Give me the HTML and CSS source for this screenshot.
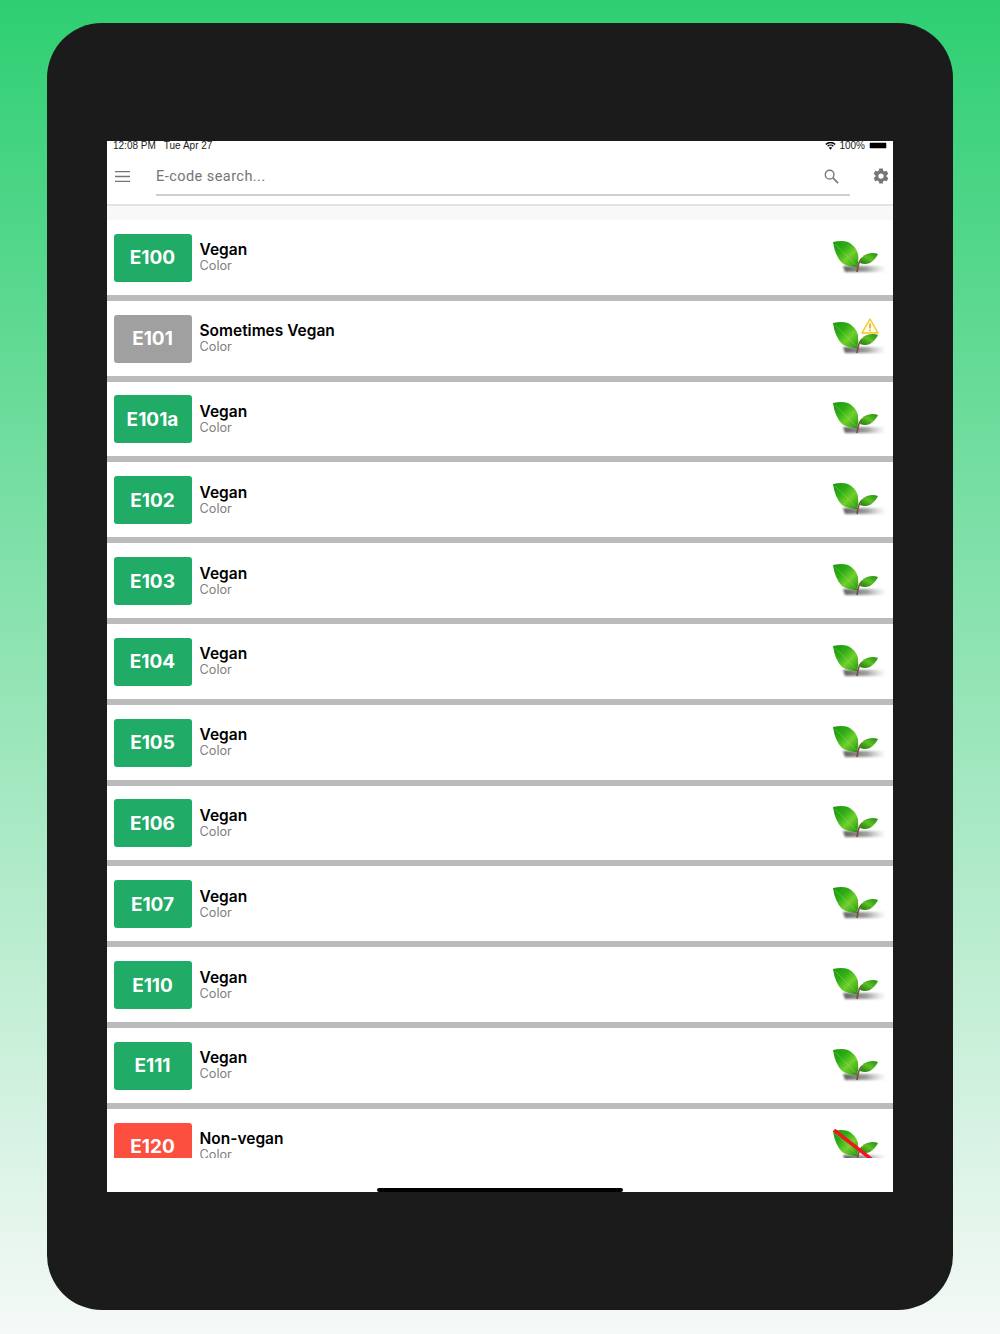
FILE: index.html
```html
<!DOCTYPE html>
<html lang="en">
<head>
    <meta charset="UTF-8">
    <meta name="viewport" content="width=device-width, initial-scale=1.0">
    <title>E-code search</title>
    <link rel="stylesheet" href="styles.css">
</head>
<body>
    <svg class="defs" width="0" height="0">
        <defs>
            <linearGradient id="leafBig" x1="0" y1="0" x2="1" y2="1">
                <stop offset="0" stop-color="#1b960f"/>
                <stop offset="0.35" stop-color="#2fae16"/>
                <stop offset="0.62" stop-color="#72d02e"/>
                <stop offset="0.85" stop-color="#3fae18"/>
                <stop offset="1" stop-color="#1a740c"/>
            </linearGradient>
            <linearGradient id="leafSmall" x1="1" y1="0" x2="0" y2="1">
                <stop offset="0" stop-color="#1f8f10"/>
                <stop offset="0.5" stop-color="#5cc024"/>
                <stop offset="1" stop-color="#1a740c"/>
            </linearGradient>
            <linearGradient id="shadow" x1="0" y1="0" x2="1" y2="0">
                <stop offset="0" stop-color="#444" stop-opacity="0.85"/>
                <stop offset="0.55" stop-color="#777" stop-opacity="0.7"/>
                <stop offset="1" stop-color="#aaa" stop-opacity="0"/>
            </linearGradient>
            <filter id="soft" x="-10%" y="-50%" width="120%" height="200%">
                <feGaussianBlur stdDeviation="0.9"/>
            </filter>
            <symbol id="leaf" viewBox="0 0 56 36">
                <path d="M10 26 H53 V32 H12 Z" fill="url(#shadow)" filter="url(#soft)"/>
                <path d="M24 32 L25 26 Q26 21 29 18" fill="none" stroke="#7a5238" stroke-width="1.700"/>
                <path d="M0 2 Q9 0 15 2 Q23 6 25 14 Q26 21 24 27 Q15 27 9 23 Q2 16 0 2Z" fill="url(#leafBig)"/>
                <path d="M2 4 Q12 14 24 26" fill="none" stroke="#b4ea78" stroke-width="0.500" opacity="0.600"/>
                <path d="M27 23 Q28 16 34 14 Q40 12 45 14 Q42 20 37 23 Q32 25 27 23Z" fill="url(#leafSmall)"/>
            </symbol>
            <symbol id="gear" viewBox="0 0 24 24">
                <path d="M19.4 13c.04-.3.06-.65.06-1s-.02-.7-.06-1l2.100-1.650c.2-.15.25-.42.12-.64l-2-3.460c-.12-.22-.39-.3-.61-.22l-2.490 1c-.52-.4-1.080-.73-1.690-.98l-.38-2.650A.49.49 0 0 0 14 2h-4c-.25 0-.46.18-.49.42l-.38 2.650c-.61.25-1.170.59-1.690.98l-2.490-1a.5.5 0 0 0-.61.22l-2 3.460c-.13.22-.07.49.12.64L4.570 11c-.04.32-.07.66-.07 1s.03.68.07 1l-2.110 1.650c-.19.15-.25.42-.12.64l2 3.460c.12.22.39.3.61.22l2.490-1c.52.4 1.080.73 1.690.98l.38 2.650c.03.24.24.42.49.42h4c.25 0 .46-.18.49-.42l.38-2.650c.61-.25 1.170-.59 1.690-.98l2.490 1c.23.09.49 0 .61-.22l2-3.460c.12-.22.07-.49-.12-.64L19.4 13zM12 15.500a3.500 3.500 0 1 1 0-7 3.500 3.500 0 0 1 0 7z"/>
            </symbol>
        </defs>
    </svg>

    <div class="device">
        <div class="screen">
            <div class="status-bar">
                <span class="status-time">12:08 PM</span>
                <span class="status-date">Tue Apr 27</span>
                <span class="status-right">
                    <svg class="wifi" viewBox="0 0 16 12" width="11" height="8"><path d="M8 11.500 5.600 8.700a3.400 3.400 0 0 1 4.800 0zM4.300 7.300 3 5.800a7 7 0 0 1 10 0l-1.300 1.500a5.200 5.200 0 0 0-7.400 0zM1.800 4.500.3 2.900a10.800 10.800 0 0 1 15.400 0l-1.500 1.600a8.800 8.800 0 0 0-12.400 0z"/></svg>
                    <span>100%</span>
                    <span class="battery"><span class="battery-fill"></span></span>
                </span>
            </div>

            <div class="toolbar">
                <svg class="menu-icon" viewBox="0 0 15 11" width="15" height="11"><path d="M0 .5h15M0 5.500h15M0 10.500h15" stroke="#757575" stroke-width="1.300"/></svg>
                <div class="search">
                    <span class="search-placeholder">E-code search...</span>
                    <svg class="search-icon" viewBox="0 0 16 16" width="15" height="15"><circle cx="6" cy="6" r="4.600" fill="none" stroke="#777" stroke-width="1.500"/><path d="M9.500 9.500 15 15" stroke="#777" stroke-width="1.700"/></svg>
                </div>
                <svg class="gear-icon" width="18" height="18"><use href="#gear"/></svg>
            </div>
            <div class="list-top"></div>

            <div class="list">
                <div class="row">
                    <div class="code">E100</div>
                    <div class="info"><div class="status">Vegan</div><div class="type">Color</div></div>
                    <div class="leaf"><svg width="56" height="36"><use href="#leaf"/></svg></div>
                </div>
                <div class="row">
                    <div class="code code-grey">E101</div>
                    <div class="info"><div class="status">Sometimes Vegan</div><div class="type">Color</div></div>
                    <div class="leaf">
                        <svg width="56" height="36"><use href="#leaf"/></svg>
                        <svg class="warn" viewBox="0 0 18 16" width="18" height="16"><path d="M9 1 17 15H1Z" fill="#fffbe8" stroke="#f5c518" stroke-width="1.400" stroke-linejoin="round"/><path d="M9 5.500v5M9 11.800v1.500" stroke="#e0a800" stroke-width="1.500"/></svg>
                    </div>
                </div>
                <div class="row">
                    <div class="code">E101a</div>
                    <div class="info"><div class="status">Vegan</div><div class="type">Color</div></div>
                    <div class="leaf"><svg width="56" height="36"><use href="#leaf"/></svg></div>
                </div>
                <div class="row">
                    <div class="code">E102</div>
                    <div class="info"><div class="status">Vegan</div><div class="type">Color</div></div>
                    <div class="leaf"><svg width="56" height="36"><use href="#leaf"/></svg></div>
                </div>
                <div class="row">
                    <div class="code">E103</div>
                    <div class="info"><div class="status">Vegan</div><div class="type">Color</div></div>
                    <div class="leaf"><svg width="56" height="36"><use href="#leaf"/></svg></div>
                </div>
                <div class="row">
                    <div class="code">E104</div>
                    <div class="info"><div class="status">Vegan</div><div class="type">Color</div></div>
                    <div class="leaf"><svg width="56" height="36"><use href="#leaf"/></svg></div>
                </div>
                <div class="row">
                    <div class="code">E105</div>
                    <div class="info"><div class="status">Vegan</div><div class="type">Color</div></div>
                    <div class="leaf"><svg width="56" height="36"><use href="#leaf"/></svg></div>
                </div>
                <div class="row">
                    <div class="code">E106</div>
                    <div class="info"><div class="status">Vegan</div><div class="type">Color</div></div>
                    <div class="leaf"><svg width="56" height="36"><use href="#leaf"/></svg></div>
                </div>
                <div class="row">
                    <div class="code">E107</div>
                    <div class="info"><div class="status">Vegan</div><div class="type">Color</div></div>
                    <div class="leaf"><svg width="56" height="36"><use href="#leaf"/></svg></div>
                </div>
                <div class="row">
                    <div class="code">E110</div>
                    <div class="info"><div class="status">Vegan</div><div class="type">Color</div></div>
                    <div class="leaf"><svg width="56" height="36"><use href="#leaf"/></svg></div>
                </div>
                <div class="row">
                    <div class="code">E111</div>
                    <div class="info"><div class="status">Vegan</div><div class="type">Color</div></div>
                    <div class="leaf"><svg width="56" height="36"><use href="#leaf"/></svg></div>
                </div>
                <div class="row">
                    <div class="code code-red">E120</div>
                    <div class="info"><div class="status">Non-vegan</div><div class="type">Color</div></div>
                    <div class="leaf">
                        <svg width="56" height="36"><use href="#leaf"/></svg>
                        <svg class="cross" viewBox="0 0 56 36" width="56" height="36"><path d="M1 1 42 33" stroke="#f5141e" stroke-width="3.500"/></svg>
                    </div>
                </div>
            </div>

            <div class="home-area"><div class="home-bar"></div></div>
        </div>
    </div>
</body>
</html>
```

FILE: styles.css
```css
* {
    box-sizing: border-box;
}
html, body {
    margin: 0;
    height: 1334px;
    overflow: hidden;
}
body {
    padding: 23px 47px 0;
    font-family: Inter, "Liberation Sans", sans-serif;
    background: linear-gradient(to bottom, #2ecf72 0%, #f5f9f7 100%);
}
.defs {
    position: absolute;
}
.device {
    height: 1287px;
    padding: 118px 60px 118px;
    background-color: #1b1b1b;
    border-radius: 55px;
}
.screen {
    height: 1051px;
    display: flex;
    flex-direction: column;
    background-color: #fff;
}

/* Status bar */
.status-bar {
    display: flex;
    align-items: center;
    height: 9px;
    padding: 0 6px;
    font-family: "Liberation Sans", sans-serif;
    font-size: 10px;
    line-height: 9px;
    color: #222;
}
.status-date {
    margin-left: 8px;
}
.status-right {
    display: flex;
    align-items: center;
    margin-left: auto;
    gap: 3px;
}
.battery {
    display: block;
    width: 18px;
    height: 7px;
    margin-left: 1px;
    border: 1px solid #bbb;
    border-radius: 2px;
}
.battery-fill {
    display: block;
    height: 100%;
    background-color: #000;
}

/* Search toolbar */
.toolbar {
    display: flex;
    align-items: center;
    height: 56px;
    padding: 0 3px 0 8px;
    border-bottom: 2px solid #e4e4e4;
}
.menu-icon {
    flex: none;
    margin-top: -2px;
}
.search {
    flex: 1;
    display: flex;
    align-items: center;
    justify-content: space-between;
    height: 37px;
    margin: 8px 0 8px 26px;
    padding: 0 11px 0 0;
    border-bottom: 2px solid #cfcfcf;
}
.search-placeholder {
    font-family: Roboto, sans-serif;
    font-size: 14.500px;
    letter-spacing: 0.450px;
    color: #757575;
}
.gear-icon {
    flex: none;
    margin-left: 22px;
    margin-top: -2px;
    fill: #767676;
}
.list-top {
    height: 14px;
    background-color: #f8f8f8;
}

/* Rows */
.list {
    height: 938px;
    overflow: hidden;
}
.row {
    display: flex;
    align-items: center;
    height: 80.800px;
    padding: 1px 7px 0 6.500px;
    border-bottom: 6px solid #bbb;
}
.code {
    flex: none;
    display: flex;
    align-items: center;
    justify-content: center;
    width: 78px;
    height: 48px;
    border-radius: 3px;
    background-color: #20ab67;
    color: #fff;
    font-size: 19px;
    font-weight: 700;
}
.code-grey {
    background-color: #a0a0a0;
}
.code-red {
    background-color: #fd4f40;
}
.info {
    flex: 1;
    margin-left: 8px;
}
.status {
    font-size: 15.500px;
    font-weight: 600;
    line-height: 16px;
    color: #000;
}
.type {
    font-size: 12.700px;
    line-height: 15px;
    color: #808080;
}
.leaf {
    position: relative;
    flex: none;
    width: 56px;
    height: 36px;
    margin-right: -3px;
}
.leaf svg {
    display: block;
}
.leaf .warn {
    position: absolute;
    top: -3px;
    left: 28px;
}
.leaf .cross {
    position: absolute;
    top: 0;
    left: 0;
}

/* Home indicator */
.home-area {
    flex: 1;
    display: flex;
    align-items: flex-end;
    justify-content: center;
}
.home-bar {
    width: 246px;
    height: 4px;
    border-radius: 2px;
    background-color: #000;
}
```
